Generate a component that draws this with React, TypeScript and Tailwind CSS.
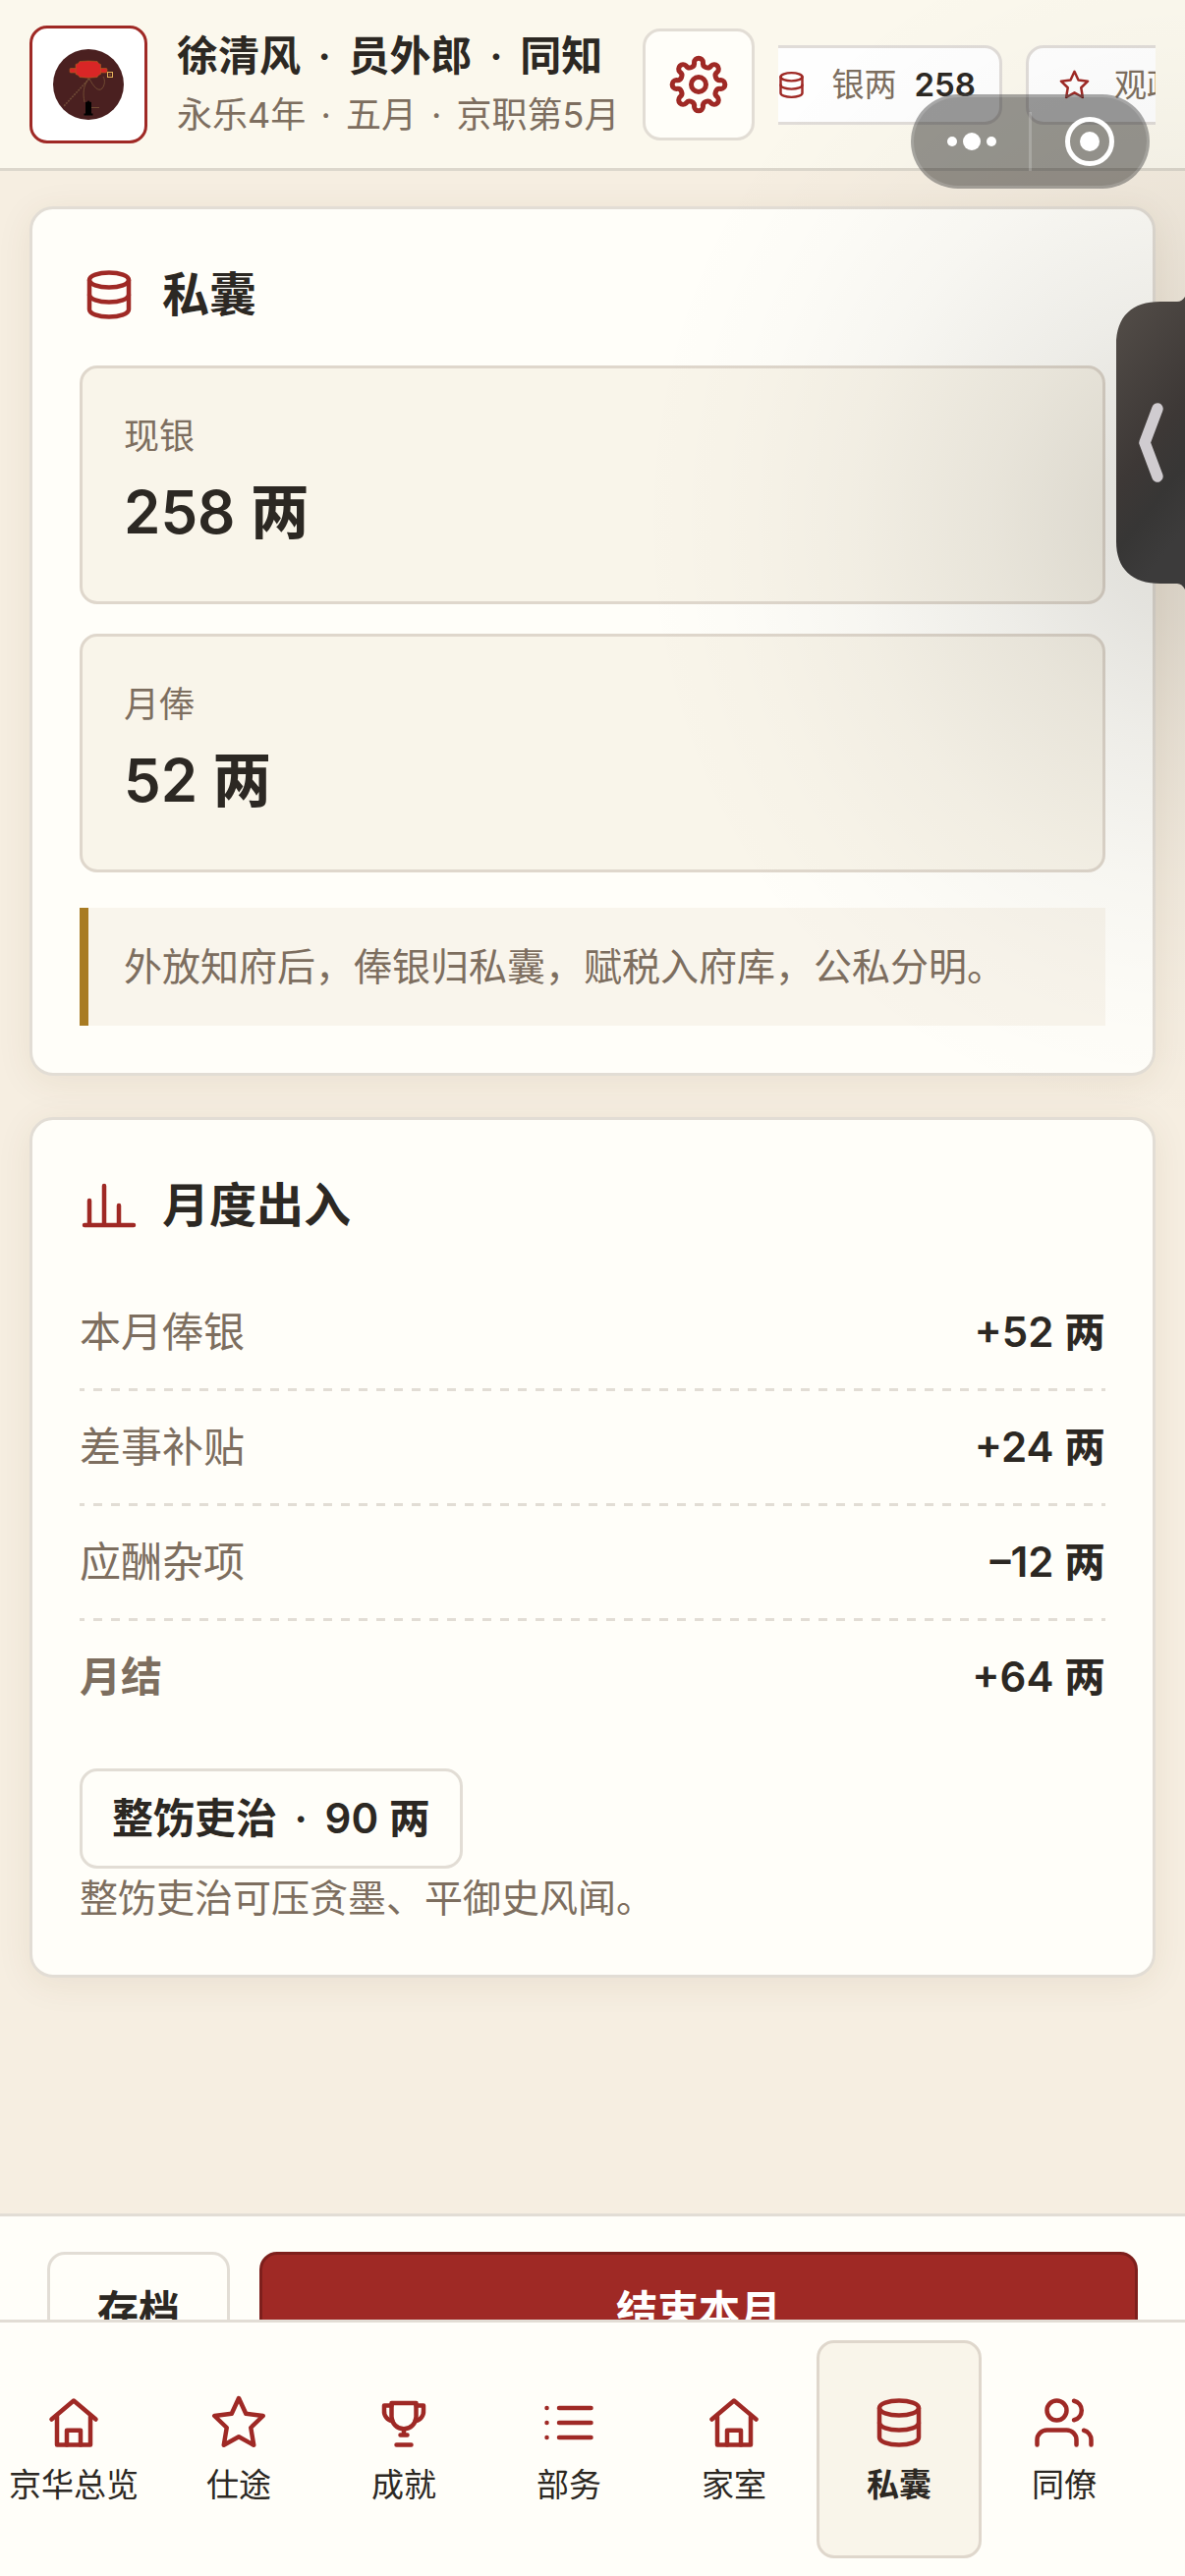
import type { ReactNode } from "react";

const strokeProps = {
  fill: "none",
  stroke: "currentColor",
  strokeLinecap: "round" as const,
  strokeLinejoin: "round" as const,
};

const ICONS: Record<string, ReactNode> = {
  home: (
    <>
      <path d="M3 10.6 12 3l9 7.6" />
      <path d="M5.2 9.4V21h13.6V9.4" />
      <path d="M9.2 21v-5.9h5.6V21" />
    </>
  ),
  star: <path d="M12 2 14.9 8.3 21.9 9.2 16.9 14 18.1 21.1 12 17.7 5.9 21.1 7.1 14 2.1 9.2 9.1 8.3Z" />,
  trophy: (
    <>
      <path d="M7 4h10v5.5a5 5 0 0 1-10 0z" />
      <path d="M7 5H4v2a4 4 0 0 0 3.4 4.3M17 5h3v2a4 4 0 0 1-3.4 4.3" />
      <path d="M12 14.5V17M10.6 17h2.8M9 21h6" />
    </>
  ),
  list: (
    <>
      <path d="M8 6H21M8 12H21M8 18H21" />
      <path d="M3 6h.01M3 12h.01M3 18h.01" />
    </>
  ),
  coins: (
    <>
      <ellipse cx="12" cy="6" rx="8" ry="3" />
      <path d="M4 6v12c0 1.7 3.6 3 8 3s8-1.3 8-3V6" />
      <path d="M4 12c0 1.7 3.6 3 8 3s8-1.3 8-3" />
    </>
  ),
  users: (
    <>
      <path d="M17 21v-2a4 4 0 0 0-4-4H5a4 4 0 0 0-4 4v2" />
      <ellipse cx="9" cy="7" rx="4" ry="4" />
      <path d="M23 21v-2a4 4 0 0 0-3-3.9M16 3.1a4 4 0 0 1 0 7.8" />
    </>
  ),
  bars: <path d="M2 20h20M4 20V10M10 20V4M16 20v-8" />,
};

function Icon({ name, className }: { name: string; className: string }) {
  return (
    <svg {...strokeProps} viewBox="0 0 24 24" strokeWidth={1.8} className={className} aria-hidden="true">
      {ICONS[name]}
    </svg>
  );
}

// 八齿齿轮：齿顶与齿谷交替的圆弧
function gearPath() {
  const point = (deg: number) => {
    const a = (deg * Math.PI) / 180;
    return `${(23.1 * Math.sin(a)).toFixed(2)} ${(-23.1 * Math.cos(a)).toFixed(2)}`;
  };
  let d = `M${point(-11.2)}`;
  for (let k = 0; k < 8; k++) {
    d += `A4.5 4.5 0 0 1 ${point(45 * k + 11.2)}A4.6 4.6 0 0 0 ${point(45 * k + 33.8)}`;
  }
  return d + "Z";
}

const tabs = [
  { icon: "home", label: "京华总览" },
  { icon: "star", label: "仕途" },
  { icon: "trophy", label: "成就" },
  { icon: "list", label: "部务" },
  { icon: "home", label: "家室" },
  { icon: "coins", label: "私囊", active: true },
  { icon: "users", label: "同僚" },
];

const ledger = [
  { label: "本月俸银", value: "+52 两" },
  { label: "差事补贴", value: "+24 两" },
  { label: "应酬杂项", value: "–12 两" },
  { label: "月结", value: "+64 两", total: true },
];

function Dot({ className = "mx-[7px]" }: { className?: string }) {
  return <span className={className}> · </span>;
}

function Card({ icon, title, children }: { icon: string; title: string; children: ReactNode }) {
  return (
    <section className="rounded-3xl border-3 border-[#e2ddd5] bg-[#fffef9] p-12 shadow-[0_6px_36px_rgba(90,70,20,0.08)]">
      <h2 className="mb-[33px] flex items-center gap-6 text-5xl leading-[78px] font-semibold">
        <Icon name={icon} className="size-15 text-[#9f2925]" />
        {title}
      </h2>
      {children}
    </section>
  );
}

function Stat({ label, value }: { label: string; value: string }) {
  return (
    <div className="rounded-[18px] border-3 border-[#dfd7cc] bg-[#f9f5ea] px-[42px] pt-[42px] pb-[41px]">
      <p className="text-4xl leading-[54px] text-[#7d6e5f]">{label}</p>
      <p className="text-6xl leading-[100px] font-semibold">{value}</p>
    </div>
  );
}

function Chip({ icon, label, value }: { icon: string; label: string; value: string }) {
  return (
    <div className="flex shrink-0 items-center rounded-[18px] border-3 border-[#e0dcd8] bg-[#fefefe] pr-6 pl-[30px] text-[33px] leading-[75px]">
      <Icon name={icon} className="mr-6 size-[33px] text-[#9f2925]" />
      <span className="mr-[18px] text-[#7d6e5f]">{label}</span>
      <span className="font-semibold">{value}</span>
    </div>
  );
}

export default function App() {
  return (
    <div className="relative flex min-h-screen flex-col overflow-hidden bg-[#f6eee1] font-['Inter','Noto_Sans_CJK_SC',sans-serif] text-[#2c2823]">
      <header className="flex items-center border-b-3 border-[#dcd7cc] bg-[#fbf8ed] px-[30px] pt-[26px] pb-[25px]">
        <div className="flex size-30 shrink-0 items-center justify-center rounded-[18px] border-3 border-[#9f2925] bg-white">
          <svg viewBox="0 0 72 72" className="size-18" aria-hidden="true">
            <circle cx="36" cy="36" r="36" fill="#4a2020" />
            <path d="M37 30 11 58" fill="none" stroke="#6f4a36" strokeWidth="1.6" strokeDasharray="2 1" />
            <path
              d="M36 30c-5 8-6 14-4 24M37 30c4 8 9 14 13 10 3-4 3-9 1-12M38 59.500h9"
              fill="none"
              stroke="#7a5537"
              strokeWidth="0.8"
            />
            <rect x="17" y="19.500" width="38" height="4.500" rx="1" fill="#d92626" stroke="#a8641f" strokeWidth="0.6" />
            <path
              d="M27 12.500q9-1 18 0 1 2.500 3.500 3v10q-2.500 0.500-3.500 3-9 1.500-18 0-1-2.500-4-3v-10q3-0.500 4-3z"
              fill="#d92626"
              stroke="#a8641f"
              strokeWidth="0.6"
            />
            <rect x="55.500" y="23.500" width="5" height="5" fill="none" stroke="#e3b15a" />
            <rect x="57.500" y="25.500" width="1" height="1" fill="#e3b15a" />
            <path d="M33 54l2-0.500 1-1.500 1 1.500 2 0.500v11.500h1.500v2h-9v-2H33z" fill="#000" />
          </svg>
        </div>
        <div className="ml-[30px] shrink-0">
          <h1 className="text-[42px] leading-[62px] font-semibold">
            徐清风
            <Dot />
            员外郎
            <Dot />
            同知
          </h1>
          <p className="text-4xl leading-[58px] text-[#7d6e5f]">
            永乐4年
            <Dot className="mx-[5px]" />
            五月
            <Dot className="mx-[5px]" />
            京职第5月
          </p>
        </div>
        <button
          type="button"
          aria-label="设置"
          className="ml-6 flex size-[114px] shrink-0 items-center justify-center rounded-[18px] border-3 border-[#e2ddd5] bg-[#fffef9] text-[#9f2925]"
        >
          <svg {...strokeProps} viewBox="-30 -30 60 60" strokeWidth={5} className="size-15" aria-hidden="true">
            <circle r="7.500" />
            <path d={gearPath()} />
          </svg>
        </button>
        <div className="ml-6 flex min-w-0 flex-1 overflow-hidden">
          <div className="-ml-9 flex gap-6">
            <Chip icon="coins" label="银两" value="258" />
            <Chip icon="star" label="观政" value="12" />
          </div>
        </div>
      </header>

      <main className="flex flex-1 flex-col gap-[42px] px-[30px] py-9">
        <Card icon="coins" title="私囊">
          <div className="flex flex-col gap-[30px]">
            <Stat label="现银" value="258 两" />
            <Stat label="月俸" value="52 两" />
          </div>
          <p className="mt-9 border-l-9 border-[#a87b22] bg-[#f9f5ec] px-9 py-[30px] text-[39px] leading-[60px] text-[#7d6e5f]">
            外放知府后，俸银归私囊，赋税入府库，公私分明。
          </p>
        </Card>
        <Card icon="bars" title="月度出入">
          <table className="block w-full text-[42px] leading-[114px]">
            <tbody className="block">
              {ledger.map((row) => (
                <tr
                  key={row.label}
                  className="flex justify-between bg-[repeating-linear-gradient(90deg,#e2ddd5_0_5px,transparent_5px_14px,#e2ddd5_14px_18px)] bg-[length:100%_3px] bg-bottom bg-no-repeat pb-[3px] last:bg-none last:pb-0"
                >
                  <th scope="row" className={`text-left text-[#7d6e5f] ${row.total ? "font-semibold" : "font-normal"}`}>
                    {row.label}
                  </th>
                  <td className="text-right font-semibold">{row.value}</td>
                </tr>
              ))}
            </tbody>
          </table>
          <button
            type="button"
            className="mt-9 block rounded-[18px] border-3 border-[#e2ddd5] px-[30px] text-[42px] leading-24 font-semibold"
          >
            整饬吏治
            <Dot />
            90 两
          </button>
          <p className="text-[39px] leading-[60px] text-[#7d6e5f]">整饬吏治可压贪墨、平御史风闻。</p>
        </Card>
      </main>

      <div className="flex gap-[30px] border-t-3 border-[#e2ddd5] bg-[#fffef9] px-12 py-9 text-[42px] leading-[114px] font-semibold">
        <button type="button" className="rounded-[18px] border-3 border-[#e2ddd5] px-12">
          存档
        </button>
        <button type="button" className="flex-1 rounded-[18px] border-3 border-[#7d1f1c] bg-[#9f2925] text-white">
          结束本月
        </button>
      </div>

      {/* 底部导航压在操作栏之上 */}
      <nav className="relative -mt-[87px] flex border-t-3 border-[#e2ddd5] bg-[#fffef9] py-[18px]">
        <div className="-ml-[9px] flex">
          {tabs.map((tab) => (
            <button
              key={tab.label}
              type="button"
              className={`flex h-[222px] w-42 shrink-0 flex-col items-center justify-center gap-2 rounded-[18px] border-3 pt-1 text-[33px] leading-[50px] ${
                tab.active ? "border-[#dfd7cc] bg-[#f9f5ea] font-semibold" : "border-transparent"
              }`}
            >
              <Icon name={tab.icon} className="size-15 text-[#9f2925]" />
              {tab.label}
            </button>
          ))}
        </div>
      </nav>

      {/* 右侧浮层的柔和阴影 */}
      <div className="pointer-events-none absolute inset-x-0 top-0 h-[1200px] bg-[radial-gradient(ellipse_560px_620px_at_100%_530px,rgba(8,6,0,0.13)_0%,rgba(8,6,0,0.11)_16%,rgba(8,6,0,0.07)_35%,rgba(8,6,0,0.03)_60%,rgba(8,6,0,0.01)_80%,transparent_100%)]" />

      <div className="absolute top-24 right-9 flex h-24 w-[243px] items-center rounded-full border-3 border-white/15 bg-black/40 text-white">
        <button type="button" aria-label="更多" className="flex flex-1 items-center justify-center gap-1.5">
          <span className="size-2.5 rounded-full bg-current" />
          <span className="size-[18px] rounded-full bg-current" />
          <span className="size-2.5 rounded-full bg-current" />
        </button>
        <span className="h-15 w-[3px] bg-white/20" />
        <button type="button" aria-label="关闭" className="flex flex-1 justify-center">
          <span className="flex size-[50px] items-center justify-center rounded-full border-5 border-current">
            <span className="size-5 rounded-full bg-current" />
          </span>
        </button>
      </div>

      <button type="button" aria-label="展开侧栏" className="absolute top-[302px] right-0">
        <svg width="70" height="298" viewBox="0 0 70 298" aria-hidden="true">
          <defs>
            <linearGradient id="drawer" x1="0" y1="0" x2="0.300" y2="1">
              <stop offset="0" stopColor="#544e49" />
              <stop offset="0.600" stopColor="#3d3836" />
              <stop offset="0.800" stopColor="#373635" />
              <stop offset="1" stopColor="#3c3b3b" />
            </linearGradient>
          </defs>
          <path d="M70 0Q67 5 62 5H45C16 5 0 20 0 49V249C0 277 16 292 45 292H62Q67 292 70 298Z" fill="url(#drawer)" />
          <path
            d="M42 114 29 148.500 42 183"
            fill="none"
            stroke="#d0ccd0"
            strokeWidth="11.500"
            strokeLinecap="round"
            strokeLinejoin="round"
          />
        </svg>
      </button>
    </div>
  );
}
